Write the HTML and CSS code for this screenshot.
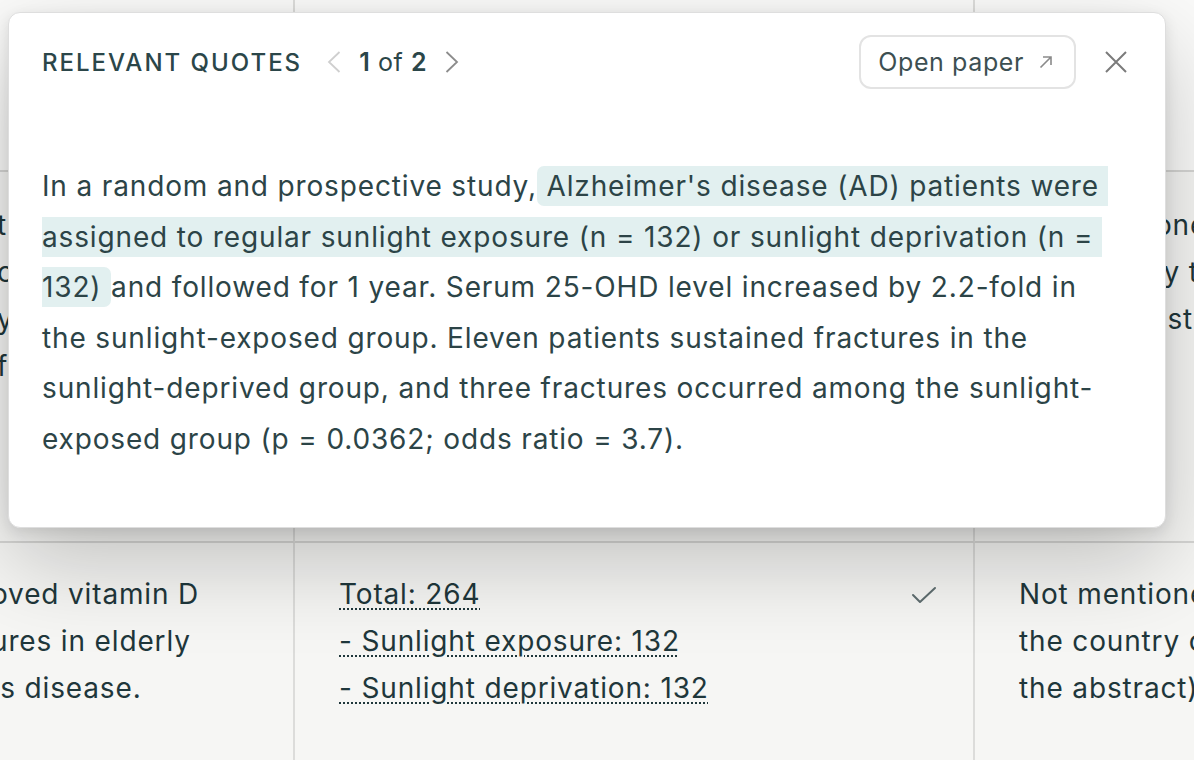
FILE: index.html
```html
<!DOCTYPE html>
<html lang="en">
<head>
<meta charset="utf-8">
<title>Relevant quotes</title>
<link rel="stylesheet" href="styles.css">
</head>
<body>
<div class="page">
  <div class="table">
    <div class="cell c1 r0"></div>
    <div class="cell c2 r0"></div>
    <div class="cell c3 r0"></div>

    <div class="cell c1 r1 clip">
      <div class="frag">t of sunlight</div>
      <div class="frag">c fractures</div>
      <div class="frag">y patients</div>
      <div class="frag">f bone</div>
    </div>
    <div class="cell c2 r1"></div>
    <div class="cell c3 r1">
      <div class="line">Not mentioned in</div>
      <div class="line">the country the</div>
      <div class="line">abstracts; study site</div>
    </div>

    <div class="cell c1 r2 clip">
      <div class="frag shift">oved vitamin D</div>
      <div class="frag shift">ures in elderly</div>
      <div class="frag shift">'s disease.</div>
    </div>
    <div class="cell c2 r2 split">
      <div class="counts">
        <div class="line"><span class="dot">Total: 264</span></div>
        <div class="line"><span class="dot">- Sunlight exposure: 132</span></div>
        <div class="line"><span class="dot">- Sunlight deprivation: 132</span></div>
      </div>
      <svg class="check" width="26" height="18" viewBox="0 0 26 18" aria-hidden="true"><path d="M2 9 L9 16 L24 2" fill="none" stroke="#5f6e70" stroke-width="2" stroke-linecap="round" stroke-linejoin="round"/></svg>
    </div>
    <div class="cell c3 r2">
      <div class="line">Not mentioned (only</div>
      <div class="line">the country of origin in</div>
      <div class="line">the abstract)</div>
    </div>
  </div>

  <div class="popup">
    <div class="pop-head">
      <div class="title">RELEVANT QUOTES</div>
      <div class="pager">
        <svg class="chev" width="14" height="24" viewBox="0 0 14 24" aria-hidden="true"><path d="M12.5 2 L2 12 L12.5 22" fill="none" stroke="#cfcfcf" stroke-width="1.8"/></svg>
        <span class="count"><b>1</b> of <b>2</b></span>
        <svg class="chev" width="14" height="24" viewBox="0 0 14 24" aria-hidden="true"><path d="M1.5 2 L12 12 L1.5 22" fill="none" stroke="#8c8c8c" stroke-width="1.8"/></svg>
      </div>
      <div class="spacer"></div>
      <button class="open-btn">Open paper
        <svg width="16" height="16" viewBox="0 0 16 16" aria-hidden="true"><path d="M2.5 13.5 L13 3 M5 3 H13 V11" fill="none" stroke="#8a8a8a" stroke-width="1.6"/></svg>
      </button>
      <svg class="close" width="24" height="24" viewBox="0 0 24 24" aria-hidden="true"><path d="M2 2 L22 22 M22 2 L2 22" fill="none" stroke="#7b7b7b" stroke-width="2"/></svg>
    </div>
    <p class="quote">In a random and prospective study,<mark>&nbsp;Alzheimer's disease (AD) patients were&nbsp;<br>assigned to regular sunlight exposure (n = 132) or sunlight deprivation (n =&nbsp;<br>132)&nbsp;</mark>and followed for 1 year. Serum 25-OHD level increased by 2.2-fold in<br>the sunlight-exposed group. Eleven patients sustained fractures in the<br>sunlight-deprived group, and three fractures occurred among the sunlight-<br>exposed group (p = 0.0362; odds ratio = 3.7).</p>
  </div>
</div>
</body>
</html>
```

FILE: styles.css
```css
html, body {
  margin: 0;
  padding: 0;
}
body {
  width: 1194px;
  height: 760px;
  overflow: hidden;
  background: #f6f6f4;
  font-family: Inter, "Noto Sans", sans-serif;
  color: #1f373b;
}
.page {
  position: relative;
  width: 1194px;
  height: 760px;
  overflow: hidden;
}
.table {
  display: grid;
  grid-template-columns: 295px 680px 1fr;
  grid-template-rows: 172px 371px 1fr;
  height: 760px;
}
.cell {
  box-sizing: border-box;
  font-size: 28px;
  letter-spacing: 0.85px;
  line-height: 47px;
}
.c1, .c2 {
  border-right: 2px solid #dcdcda;
}
.r0, .r1 {
  border-bottom: 2px solid #d6d6d4;
}
.r0 {
  background: #fafaf9;
}
.r1 {
  padding-top: 30px;
}
.r2 {
  padding-top: 28px;
}
.clip {
  overflow: hidden;
  white-space: nowrap;
}
.frag {
  margin-left: -3px;
}
.frag.shift {
  margin-left: -9px;
}
.c2, .c3 {
  padding-left: 44px;
}
.c3 {
  overflow: hidden;
}
.c3 .line {
  white-space: nowrap;
}
.split {
  display: flex;
  justify-content: space-between;
  align-items: flex-start;
  padding-right: 36px;
}
.dot {
  text-decoration: underline dotted 2px;
  text-underline-offset: 4px;
}
.check {
  margin-top: 15px;
}

/* popup */
.popup {
  position: absolute;
  left: 8px;
  top: 12px;
  width: 1158px;
  height: 516px;
  box-sizing: border-box;
  background: #ffffff;
  border: 1px solid #dedede;
  border-radius: 12px;
  box-shadow: 0 4px 14px rgba(0, 0, 0, 0.1), 0 34px 90px rgba(0, 0, 0, 0.22);
  padding: 22px 37px 0 33px;
  color: #2c4447;
}
.pop-head {
  display: flex;
  align-items: center;
  height: 54px;
}
.title {
  font-size: 24px;
  font-weight: 500;
  letter-spacing: 2px;
  color: #2b4649;
}
.pager {
  display: flex;
  align-items: center;
  margin-left: 25px;
  gap: 18px;
}
.chev {
  display: block;
}
.count {
  font-size: 25px;
  letter-spacing: 0.6px;
  color: #2b4649;
}
.count b {
  font-weight: 600;
}
.spacer {
  flex: 1;
}
.open-btn {
  display: flex;
  align-items: center;
  gap: 14px;
  height: 54px;
  box-sizing: border-box;
  padding: 0 20px 0 17px;
  background: #ffffff;
  border: 2px solid #e3e3e3;
  border-radius: 12px;
  font-family: Inter, "Noto Sans", sans-serif;
  font-size: 25px;
  letter-spacing: 0.6px;
  color: #3d4f52;
}
.close {
  display: block;
  margin-left: 28px;
}
.quote {
  margin: 72px 0 0 0;
  font-size: 28px;
  letter-spacing: 0.85px;
  line-height: 50.5px;
  white-space: nowrap;
}
mark {
  background: #e2f0f0;
  color: inherit;
  border-radius: 7px;
  padding: 3px 1px;
}
```
